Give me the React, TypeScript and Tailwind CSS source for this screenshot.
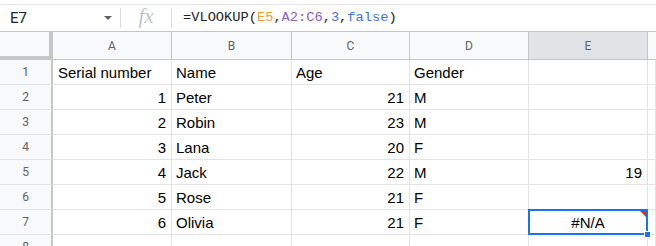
const rows: [string, string, string, string][] = [
  ['1', 'Peter', '21', 'M'],
  ['2', 'Robin', '23', 'M'],
  ['3', 'Lana', '20', 'F'],
  ['4', 'Jack', '22', 'M'],
  ['5', 'Rose', '21', 'F'],
  ['6', 'Olivia', '21', 'F'],
];

const cols = ['A', 'B', 'C', 'D', 'E'];

const cell = 'h-[25px] border-r border-b border-[#e2e3e3] text-[15px] leading-[26px] text-black whitespace-nowrap overflow-hidden';
const rowHead = 'h-[25px] border-r-[2px] border-b border-r-[#c4c7c5] border-b-[#e2e3e3] bg-[#f8f9fa] text-[12px] leading-[25px] text-center text-[#5f6368]';

const App = () => {
  return (
    <div className="w-[656px] h-[246px] overflow-hidden bg-white" style={{ fontFamily: '"Liberation Sans", Arial, sans-serif' }}>
      {/* Formula Bar Start */}
      <div className="h-[5px] border-b border-[#e6e6e6]" />
      <div className="h-[27px] flex items-center border-b border-[#c4c7c5]">
        <div className="w-[120px] flex items-center pl-[10px] pr-[8px]">
          <span className="text-[15px] text-[#202124]" style={{ fontFamily: 'Roboto, sans-serif' }}>E7</span>
          <span className="ml-auto w-0 h-0 border-l-[4px] border-r-[4px] border-t-[4px] border-l-transparent border-r-transparent border-t-[#5f6368]" />
        </div>
        <div className="w-px h-[20px] bg-[#dadce0]" />
        <div className="w-[50px] flex justify-center">
          <span className="text-[21px] italic text-[#c0c4c8] leading-none -mt-[3px]" style={{ fontFamily: '"Liberation Serif", serif' }}>fx</span>
        </div>
        <div className="w-px h-[20px] bg-[#dadce0]" />
        <div className="pl-[11px] text-[13.7px] text-[#202124]" style={{ fontFamily: '"Liberation Mono", monospace' }}>
          =VLOOKUP(<span className="text-[#f29b38]">E5</span>,<span className="text-[#8a5cc9]">A2:C6</span>,<span className="text-[#3f72d9]">3</span>,<span className="text-[#3f72d9]">false</span>)
        </div>
      </div>
      {/* Formula Bar End */}

      {/* Grid Start */}
      <div className="grid grid-cols-[53px_119px_120px_118px_119px_119px_1fr]">
        {/* Header Row */}
        <div className="h-[28px] bg-[#f8f9fa] border-r-[4px] border-b-[4px] border-[#c4c7c5]" />
        {cols.map((c) => (
          <div
            key={c}
            className={`h-[28px] border-r border-b border-r-[#c4c7c5] border-b-[#c4c7c5] text-[12px] leading-[28px] text-center text-[#5f6368] ${c === 'E' ? 'bg-[#e1e3e6]' : 'bg-[#f8f9fa]'}`}
            style={{ fontFamily: 'Roboto, sans-serif' }}
          >
            {c}
          </div>
        ))}
        <div className="h-[28px] bg-[#f8f9fa] border-b border-[#c4c7c5]" />

        {/* Row 1 */}
        <div className={rowHead} style={{ fontFamily: 'Roboto, sans-serif' }}>1</div>
        <div className={`${cell} pl-[5px]`}>Serial number</div>
        <div className={`${cell} pl-[4px]`}>Name</div>
        <div className={`${cell} pl-[4px]`}>Age</div>
        <div className={`${cell} pl-[4px]`}>Gender</div>
        <div className={cell} />
        <div className={cell} />

        {rows.map((r, i) => {
          const n = i + 2;
          const selected = n === 7;
          return (
            <div key={n} className="contents">
              <div className={`${rowHead} ${selected ? 'bg-[#e1e3e6]' : ''}`} style={{ fontFamily: 'Roboto, sans-serif' }}>
                {n}
              </div>
              <div className={`${cell} text-right pr-[5px]`}>{r[0]}</div>
              <div className={`${cell} pl-[4px]`}>{r[1]}</div>
              <div className={`${cell} text-right pr-[5px]`}>{r[2]}</div>
              <div className={`${cell} pl-[4px]`}>{r[3]}</div>
              {selected ? (
                <div className={`${cell} relative text-center overflow-visible`}>
                  #N/A
                  <span className="absolute -top-px -left-px -right-px -bottom-px border-2 border-[#1a73e8]" />
                  <span className="absolute top-px right-px w-0 h-0" style={{ borderTop: '6px solid #d93025', borderLeft: '6px solid transparent' }} />
                  <span className="absolute -right-[4px] -bottom-[4px] w-[7px] h-[7px] bg-[#1a73e8] border border-white z-10" />
                </div>
              ) : (
                <div className={`${cell} text-right pr-[5px]`}>{n === 5 ? '19' : ''}</div>
              )}
              <div className={cell} />
            </div>
          );
        })}

        {/* Row 8 */}
        <div className={rowHead} style={{ fontFamily: 'Roboto, sans-serif' }}>8</div>
        <div className={cell} />
        <div className={cell} />
        <div className={cell} />
        <div className={cell} />
        <div className={cell} />
        <div className={cell} />
      </div>
      {/* Grid End */}
    </div>
  );
};

export default App;
